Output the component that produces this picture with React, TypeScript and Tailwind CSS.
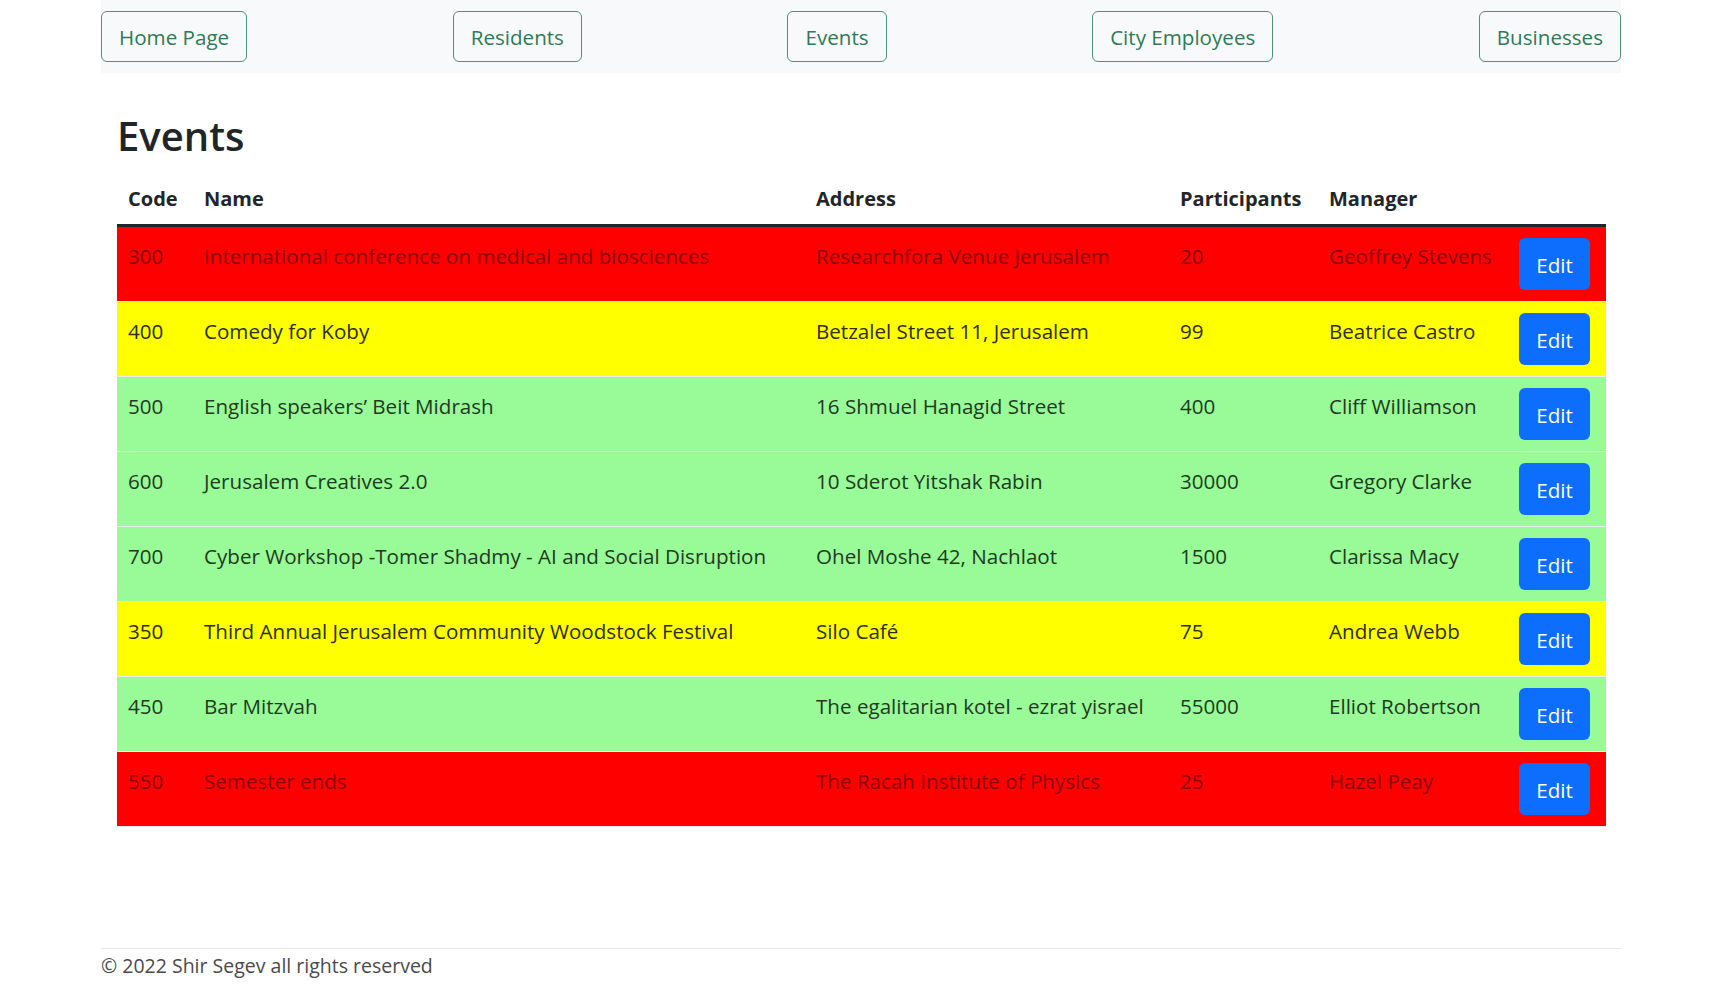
import React from "react";

type Row = {
  code: string;
  name: string;
  address: string;
  participants: string;
  manager: string;
  color: "red" | "yellow" | "green";
};

const rows: Row[] = [
  { code: "300", name: "International conference on medical and biosciences", address: "Researchfora Venue Jerusalem", participants: "20", manager: "Geoffrey Stevens", color: "red" },
  { code: "400", name: "Comedy for Koby", address: "Betzalel Street 11, Jerusalem", participants: "99", manager: "Beatrice Castro", color: "yellow" },
  { code: "500", name: "English speakers’ Beit Midrash", address: "16 Shmuel Hanagid Street", participants: "400", manager: "Cliff Williamson", color: "green" },
  { code: "600", name: "Jerusalem Creatives 2.0", address: "10 Sderot Yitshak Rabin", participants: "30000", manager: "Gregory Clarke", color: "green" },
  { code: "700", name: "Cyber Workshop -Tomer Shadmy - AI and Social Disruption", address: "Ohel Moshe 42, Nachlaot", participants: "1500", manager: "Clarissa Macy", color: "green" },
  { code: "350", name: "Third Annual Jerusalem Community Woodstock Festival", address: "Silo Café", participants: "75", manager: "Andrea Webb", color: "yellow" },
  { code: "450", name: "Bar Mitzvah", address: "The egalitarian kotel - ezrat yisrael", participants: "55000", manager: "Elliot Robertson", color: "green" },
  { code: "550", name: "Semester ends", address: "The Racah Institute of Physics", participants: "25", manager: "Hazel Peay", color: "red" },
];

const rowClass: Record<Row["color"], string> = {
  red: "bg-[#ff0000] text-[#8a0000]",
  yellow: "bg-[#ffff00] text-[#2e2e12]",
  green: "bg-[#98fb98] text-[#1f3a22]",
};

const navItems = ["Home Page", "Residents", "Events", "City Employees", "Businesses"];

export default function App() {
  return (
    <div
      className="min-h-[1000px] bg-white text-[#212529] text-[20.6px] leading-[33px]"
      style={{ fontFamily: '"Open Sans", "Noto Sans", sans-serif' }}
    >
      <nav className="mx-[101px] h-[73px] bg-[#f8f9fa] flex items-start justify-between pt-[11px]">
        {navItems.map((n) => (
          <button
            key={n}
            className="h-[51px] px-[17px] border border-[#4e9174] rounded-[6px] text-[#2f7a57] text-[20.6px] leading-[33px] bg-transparent pt-[2px]"
          >
            {n}
          </button>
        ))}
      </nav>

      <main className="mx-[117px] w-[1489px] pt-[36px]">
        <h2 className="text-[40px] leading-[53px] font-semibold mb-[10px] text-[#212529]">Events</h2>
        <table className="w-[1489px] table-fixed border-collapse">
          <colgroup>
            <col className="w-[76px]" />
            <col className="w-[612px]" />
            <col className="w-[364px]" />
            <col className="w-[149px]" />
            <col className="w-[190px]" />
            <col className="w-[98px]" />
          </colgroup>
          <thead>
            <tr className="border-b border-[#dee2e6]">
              {["Code", "Name", "Address", "Participants", "Manager", ""].map((h, i) => (
                <th key={i} className="text-left font-bold text-[20px] px-[11px] pt-[10px] pb-[9px] align-bottom whitespace-nowrap">
                  {h}
                </th>
              ))}
            </tr>
          </thead>
          <tbody className="border-t-[3px] border-[#212529]">
            {rows.map((r) => (
              <tr key={r.code} className={`${rowClass[r.color]} border-b border-[#e9ecef]`}>
                <td className="px-[11px] pt-[13px] align-top whitespace-nowrap">{r.code}</td>
                <td className="px-[11px] pt-[13px] align-top whitespace-nowrap">{r.name}</td>
                <td className="px-[11px] pt-[13px] align-top whitespace-nowrap">{r.address}</td>
                <td className="px-[11px] pt-[13px] align-top whitespace-nowrap">{r.participants}</td>
                <td className="px-[11px] pt-[13px] align-top whitespace-nowrap">{r.manager}</td>
                <td className="p-[11px] align-top">
                  <button className="h-[52px] w-[71px] rounded-[6px] bg-[#0d6efd] text-white text-[20.6px] leading-[33px] pt-[2px]">
                    Edit
                  </button>
                </td>
              </tr>
            ))}
          </tbody>
        </table>
      </main>

      <footer className="mx-[101px] mt-[121px] border-t border-[#e5e7eb] text-[19.5px] text-[#4a4a4a]">
        © 2022 Shir Segev all rights reserved
      </footer>
    </div>
  );
}
